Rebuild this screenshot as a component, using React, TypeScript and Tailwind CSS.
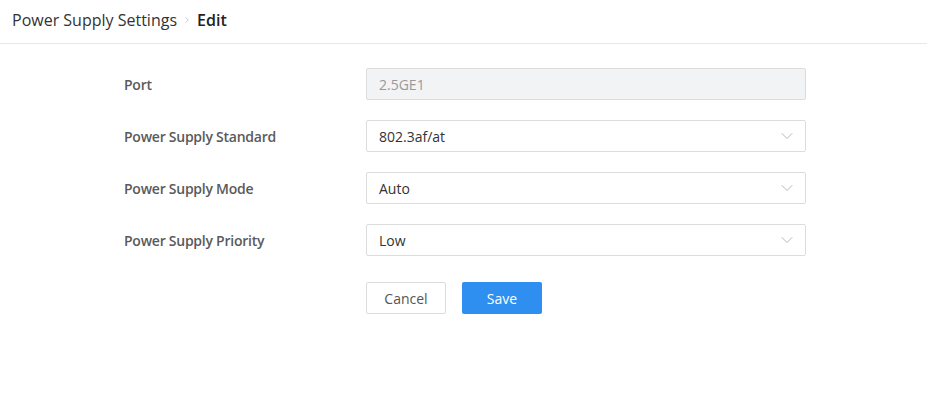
import { ChevronDown, ChevronRight } from 'lucide-react'

const fields = [
  { label: 'Power Supply Standard', value: '802.3af/at' },
  { label: 'Power Supply Mode', value: 'Auto' },
  { label: 'Power Supply Priority', value: 'Low' },
]

function Row({ label, children }: { label: string; children: React.ReactNode }) {
  return (
    <div className="flex items-center h-8">
      <div className="w-[242px] text-[14px] font-semibold tracking-[-0.25px] text-[#5a5a5a]">{label}</div>
      {children}
    </div>
  )
}

export default function App() {
  return (
    <div
      className="w-[927px] h-[402px] bg-white"
      style={{ fontFamily: '"Open Sans", "Noto Sans", sans-serif' }}
    >
      <div className="h-[44px] border-b border-[#e8e8e8] flex items-center pl-3 pb-1">
        <span className="text-[16px] text-[#333]">Power Supply Settings</span>
        <ChevronRight className="w-2.5 h-2.5 mx-[5px] text-[#aaa]" strokeWidth={1.5} />
        <span className="text-[16px] font-semibold text-[#222]">Edit</span>
      </div>
      <div className="pl-[124px] pt-6 flex flex-col gap-5">
        <Row label="Port">
          <div className="w-[440px] h-8 rounded-[2px] border border-[#dcdcdc] bg-[#f2f3f5] flex items-center px-3 text-[14px] text-[#999]">
            2.5GE1
          </div>
        </Row>
        {fields.map((f) => (
          <Row key={f.label} label={f.label}>
            <div className="w-[440px] h-8 rounded-[2px] border border-[#dcdcdc] bg-white flex items-center justify-between pl-3 pr-2 text-[14px] text-[#333]">
              <span>{f.value}</span>
              <ChevronDown className="w-5 h-5 text-[#aaa]" strokeWidth={1} />
            </div>
          </Row>
        ))}
        <div className="flex gap-4 pl-[242px] pt-[6px]">
          <button className="w-20 h-8 rounded-[2px] border border-[#dcdcdc] bg-white text-[14px] text-[#555]">
            Cancel
          </button>
          <button className="w-20 h-8 rounded-[2px] bg-[#2e8ff0] text-[14px] text-white">
            Save
          </button>
        </div>
      </div>
    </div>
  )
}
